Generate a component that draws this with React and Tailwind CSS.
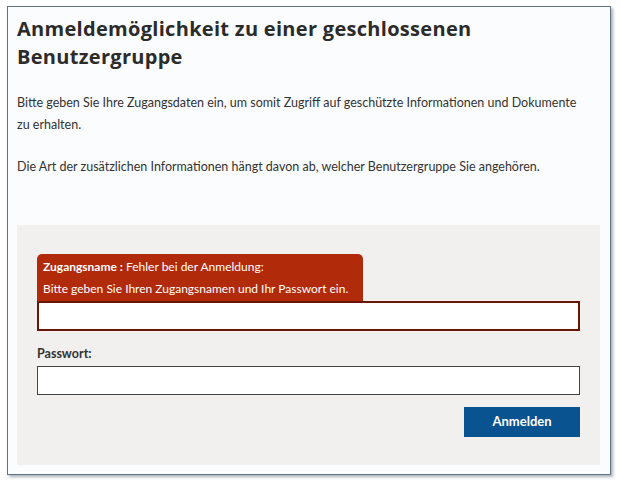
import React from 'react';

const head = { fontFamily: '"Open Sans", "Noto Sans", sans-serif' };
const body = { fontFamily: 'Lato, "Noto Sans", sans-serif' };

const ErrorTip = () => (
  <div className="w-[326px] whitespace-nowrap rounded-t-[5px] bg-[#b12a09] px-[6px] pt-[2px] pb-[1px] text-[12px] leading-[22px] text-white">
    <div>
      <span className="font-bold">Zugangsname :</span> Fehler bei der Anmeldung:
    </div>
    <div>Bitte geben Sie Ihren Zugangsnamen und Ihr Passwort ein.</div>
  </div>
);

const LoginForm = () => (
  <div className="mt-[47px] mr-[10px] bg-[#f1f0ef] px-[20px] pt-[29px] pb-[28px]">
    <ErrorTip />
    <input
      type="text"
      className="block h-[30px] w-full border-2 border-[#6a1605] bg-white outline-none"
    />
    <label className="mt-[15px] block text-[12.5px] font-bold leading-[16px] text-[#333]">
      Passwort:
    </label>
    <input
      type="password"
      className="mt-[4px] block h-[29px] w-full border border-[#444] bg-white outline-none"
    />
    <div className="mt-[12px] flex justify-end">
      <button className="h-[30px] w-[116px] bg-[#0a5391] text-[13px] font-bold text-white">
        Anmelden
      </button>
    </div>
  </div>
);

export default function App() {
  return (
    <div className="h-[486px] w-[621px] bg-white pt-[6px] pl-[7px]" style={body}>
      <div className="h-[469px] w-[604px] border border-[#5f7385] bg-[#fbfcfd] pl-[9px] pt-[8px] shadow-[2px_2px_3px_rgba(60,80,100,0.45)]">
        <h1 className="text-[20px] font-bold leading-[28px] tracking-[0.3px] text-[#2b2b2b]" style={head}>
          Anmeldemöglichkeit zu einer geschlossenen
          <br />
          Benutzergruppe
        </h1>
        <div className="mt-[21px] pr-[20px] text-[12.5px] leading-[22px] text-[#333]">
          <p>
            Bitte geben Sie Ihre Zugangsdaten ein, um somit Zugriff auf geschützte Informationen und Dokumente
            zu erhalten.
          </p>
          <p className="mt-[20px]">
            Die Art der zusätzlichen Informationen hängt davon ab, welcher Benutzergruppe Sie angehören.
          </p>
        </div>
        <LoginForm />
      </div>
    </div>
  );
}
